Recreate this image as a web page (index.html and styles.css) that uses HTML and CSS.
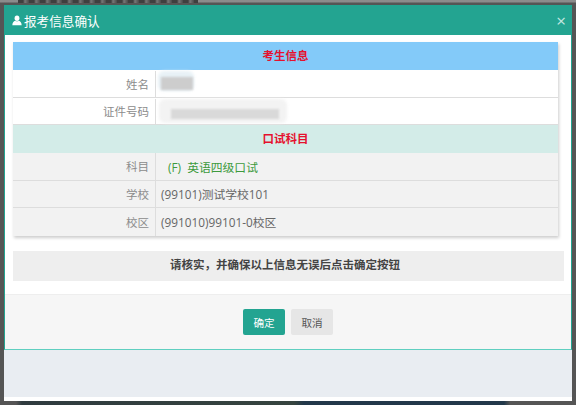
FILE: index.html
```html
<!DOCTYPE html>
<html>
<head>
    <title>报考信息确认</title>
    <link rel="stylesheet" href="styles.css">
</head>
<body>
    <div class="top-strip"><div class="strip-text"></div></div>
    <div class="window">
        <div class="modal">
            <div class="modal-header">
                <div class="modal-title">
                    <svg class="user-icon" viewBox="0 0 12 12"><ellipse cx="6" cy="3.3" rx="2.9" ry="3.2"/><path d="M.4 11.6c0-3.2 1.6-4.7 3.4-5.4.7.5 1.4.8 2.2.8s1.500-.3 2.200-.8c1.800.7 3.400 2.200 3.400 5.400z"/></svg>
                    <span>报考信息确认</span>
                </div>
                <span class="close">×</span>
            </div>
            <div class="modal-body">
                <div class="info-table">
                    <div class="section section-blue">考生信息</div>
                    <div class="row row-white">
                        <div class="label">姓名</div>
                        <div class="value"><span class="blob blob-name"></span><span class="smudge smudge-name"></span></div>
                    </div>
                    <div class="row row-white">
                        <div class="label">证件号码</div>
                        <div class="value"><span class="blob blob-id"></span><span class="smudge smudge-id"></span></div>
                    </div>
                    <div class="section section-green">口试科目</div>
                    <div class="row row-grey">
                        <div class="label">科目</div>
                        <div class="value subject">(F)&nbsp; 英语四级口试</div>
                    </div>
                    <div class="row row-grey">
                        <div class="label">学校</div>
                        <div class="value">(99101)测试学校101</div>
                    </div>
                    <div class="row row-grey">
                        <div class="label">校区</div>
                        <div class="value">(991010)99101-0校区</div>
                    </div>
                </div>
                <div class="notice">请核实，并确保以上信息无误后点击确定按钮</div>
            </div>
            <div class="modal-footer">
                <button class="btn btn-ok">确定</button>
                <button class="btn btn-cancel">取消</button>
            </div>
        </div>
        <div class="page-below"></div>
    </div>
    <div class="bottom-strip"></div>
</body>
</html>
```

FILE: styles.css
```css
* {
    box-sizing: border-box;
}

body {
    margin: 0;
    width: 576px;
    height: 405px;
    overflow: hidden;
    background-color: #555;
    font-family: "Open Sans", "Noto Sans CJK SC", sans-serif;
    font-size: 11.5px;
    color: #676a6c;
}

/* page behind the dialog, only a sliver of it shows */
.top-strip {
    height: 5px;
    padding-left: 18px;
    background: linear-gradient(#8c8c8c 0, #8c8c8c 2px, #555 3px);
}

.strip-text {
    width: 180px;
    height: 3px;
    background: repeating-linear-gradient(90deg, #3f3f3f 0, #3f3f3f 5px, #777 7px, #4a4a4a 11px);
}

.bottom-strip {
    height: 5px;
    margin: 0 4px;
    background: linear-gradient(90deg, #555 0, #555 12px, #2f3b3f 18px, #36443f 290px, #22384a 300px, #22384a 500px, #555 506px);
}

.window {
    width: 568px;
    margin-left: 4px;
    background-color: #fff;
    padding-bottom: 4px;
}

.modal {
    height: 345px;
    display: flex;
    flex-direction: column;
    background-color: #fff;
    border-bottom: 1px solid #5fcfc0;
    border-left: 1px solid #23a491;
    border-right: 1px solid #23a491;
}

.modal-header {
    height: 30px;
    flex-shrink: 0;
    display: flex;
    align-items: center;
    justify-content: space-between;
    padding: 0 5px 0 7px;
    background-color: #23a491;
    color: #fff;
}

.modal-title {
    display: flex;
    align-items: center;
    gap: 2px;
    font-size: 12.6px;
}

.user-icon {
    width: 10px;
    height: 11px;
    fill: #fff;
}

.close {
    font-size: 17px;
    line-height: 1;
    color: #c5e8e2;
}

.modal-body {
    flex: 1;
    padding: 7px 7px 0 8px;
}

.info-table {
    width: 545px;
    box-shadow: 1px 2px 3px rgba(0, 0, 0, 0.2);
}

.section {
    height: 28px;
    padding-bottom: 2px;
    display: flex;
    align-items: center;
    justify-content: center;
    font-weight: bold;
    color: #e5112e;
}

.section-blue {
    background-color: #83caf9;
}

.section-green {
    background-color: #d3ece8;
}

.row {
    height: 27.5px;
    display: flex;
    background-color: #fff;
    border-bottom: 1px solid #ddd;
}

.row:last-child {
    border-bottom: none;
}

.row-white {
    padding-top: 1px;
}

.row-grey {
    background-color: #f2f2f2;
}

.label {
    width: 143px;
    flex-shrink: 0;
    display: flex;
    align-items: center;
    justify-content: flex-end;
    padding-right: 6px;
    border-right: 1px solid #ddd;
    color: #8c8c8c;
}

.value {
    position: relative;
    flex: 1;
    display: flex;
    align-items: center;
    padding-left: 5px;
    font-size: 11.8px;
    color: #666;
}

.subject {
    padding-left: 12px;
    color: #3d9a3d;
}

/* blurred-out personal data */
.smudge,
.blob {
    position: absolute;
    display: block;
}

.smudge {
    background-color: #cdcdcd;
    filter: blur(1px);
}

.blob {
    background-color: #f3f3f3;
    border-radius: 6px;
    filter: blur(1.5px);
}

.blob-name {
    left: 2px;
    top: 0;
    width: 36px;
    height: 20px;
    background-color: #e8f1f6;
}

.blob-id {
    left: 3px;
    top: 0;
    width: 128px;
    height: 24px;
}

.smudge-name {
    left: 5px;
    top: 6px;
    width: 32px;
    height: 13px;
}

.smudge-id {
    left: 15px;
    top: 10px;
    width: 108px;
    height: 10px;
    background-color: #d9d9d9;
}

.notice {
    width: 551px;
    height: 30px;
    margin-top: 15px;
    padding: 0 7px 3px 0;
    display: flex;
    align-items: center;
    justify-content: center;
    font-weight: bold;
    color: #444;
    background-color: #eee;
}

.modal-footer {
    height: 55px;
    flex-shrink: 0;
    display: flex;
    justify-content: center;
    align-items: flex-start;
    gap: 6px;
    padding-top: 14px;
    background-color: #f6f6f6;
    border-top: 1px solid #eee;
}

.btn {
    width: 42px;
    height: 26px;
    padding: 0;
    border: none;
    border-radius: 2px;
    font-family: inherit;
    font-size: 10.6px;
}

.btn-ok {
    background-color: #23a491;
    color: #fff;
}

.btn-cancel {
    background-color: #e6e6e6;
    color: #555;
}

.page-below {
    height: 47px;
    background-color: #e9edf2;
}
```
